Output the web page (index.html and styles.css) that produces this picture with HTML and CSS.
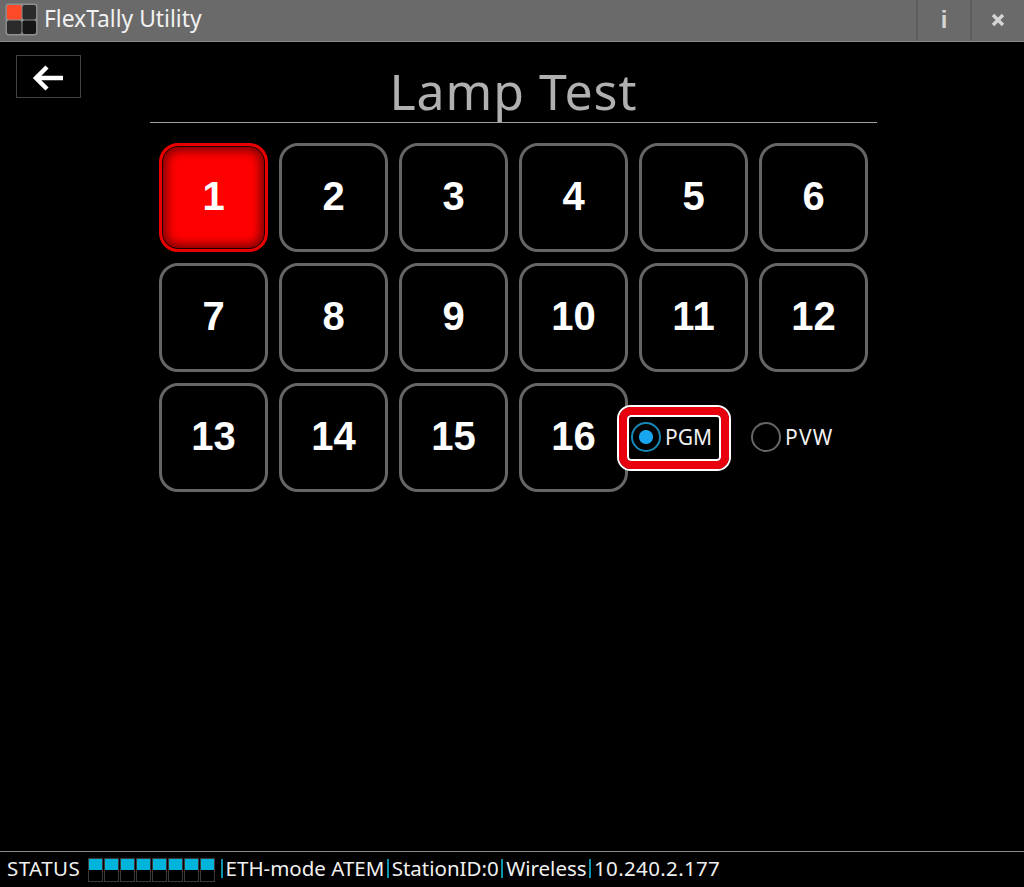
FILE: index.html
```html
<!DOCTYPE html>
<html lang="en">
<head>
<meta charset="utf-8">
<title>FlexTally Utility</title>
<link rel="stylesheet" href="styles.css">
</head>
<body>
<div class="app">
  <header class="titlebar">
    <svg class="logo" width="33" height="33" viewBox="0 0 34 34">
      <rect x="0.5" y="0.5" width="33" height="33" rx="3" fill="#8f8f8f"/>
      <rect x="2" y="2" width="15" height="15" rx="2" fill="#ff4a2a"/>
      <rect x="18" y="2" width="14" height="15" rx="2" fill="#2b2b2b"/>
      <rect x="2" y="18" width="15" height="14" rx="2" fill="#2b2b2b"/>
      <rect x="18" y="18" width="14" height="14" rx="2" fill="#151515"/>
    </svg>
    <span class="app-name">FlexTally Utility</span>
    <div class="win-buttons">
      <div class="win-btn info">i</div>
      <div class="win-btn close">
        <svg width="14" height="14" viewBox="0 0 14 14"><path d="M2 2L12 12M12 2L2 12" stroke="#d4d4d4" stroke-width="3.4"/></svg>
      </div>
    </div>
  </header>
  <main class="content">
    <div class="back">
      <svg width="34" height="30" viewBox="0 0 34 30"><path d="M32 15H5M16 4L5 15L16 26" fill="none" stroke="#fff" stroke-width="4.5"/></svg>
    </div>
    <div class="panel">
      <h1 class="title">Lamp Test</h1>
      <div class="grid">
        <div class="lamp on">1</div>
        <div class="lamp">2</div>
        <div class="lamp">3</div>
        <div class="lamp">4</div>
        <div class="lamp">5</div>
        <div class="lamp">6</div>
        <div class="lamp">7</div>
        <div class="lamp">8</div>
        <div class="lamp">9</div>
        <div class="lamp">10</div>
        <div class="lamp">11</div>
        <div class="lamp">12</div>
        <div class="lamp">13</div>
        <div class="lamp">14</div>
        <div class="lamp">15</div>
        <div class="lamp">16</div>
        <div class="radios">
          <div class="radio selected"><span class="dot"></span><span class="radio-text">PGM</span></div>
          <div class="radio"><span class="dot"></span><span class="radio-text pvw">PVW</span></div>
        </div>
      </div>
    </div>
  </main>
  <footer class="statusbar">
    <span class="label">STATUS</span>
    <div class="meter">
      <div class="cell"></div><div class="cell"></div><div class="cell"></div><div class="cell"></div>
      <div class="cell"></div><div class="cell"></div><div class="cell"></div><div class="cell"></div>
    </div>
    <span class="sep"></span><span>ETH-mode ATEM</span>
    <span class="sep"></span><span>StationID:0</span>
    <span class="sep"></span><span>Wireless</span>
    <span class="sep"></span><span class="ip">10.240.2.177</span>
  </footer>
</div>
</body>
</html>
```

FILE: styles.css
```css
* { box-sizing: border-box; }
html, body { margin: 0; height: 100%; background: #000; }
body { font-family: "Noto Sans", "Open Sans", sans-serif; color: #fff; overflow: hidden; }
.app { height: 887px; display: flex; flex-direction: column; }

.titlebar {
  height: 42px; flex: none; display: flex; align-items: center;
  background: #6a6a6a; border-bottom: 1px solid #8a8a8a; padding-left: 4px;
}
.logo { flex: none; margin: 0 6px 2px 1px; }
.app-name { font-size: 22.8px; color: #f2f2f2; padding-bottom: 5px; }
.win-buttons { margin-left: auto; display: flex; height: 100%; }
.win-btn {
  width: 54px; display: flex; align-items: center; justify-content: center;
  border-left: 2px solid #5e5e5e; color: #d4d4d4; padding-bottom: 2px;
}
.info { font: bold 24px "Liberation Sans", sans-serif; }

.content { flex: 1; min-height: 0; display: flex; padding: 13px 0 0 16px; }
.back {
  width: 65px; height: 43px; flex: none; border: 1px solid #444;
  display: flex; align-items: center; justify-content: center; padding: 3px 2px 0 0;
}
.panel { width: 727px; margin-left: 69px; }
.title {
  margin: 0; height: 68px; text-align: center; font-weight: 400; font-size: 50px; line-height: 72px;
  color: #b0b0b0; border-bottom: 1px solid #a0a0a0; letter-spacing: 1px;
}
.grid {
  display: grid; grid-template-columns: repeat(6, 109px); grid-auto-rows: 109px;
  gap: 11px; margin: 20px 0 0 9px;
}
.lamp {
  border: 3px solid #666; border-radius: 19px; background: #000;
  display: flex; align-items: center; justify-content: center;
  font: bold 40px "Liberation Sans", sans-serif; color: #fff; padding-bottom: 3px;
}
.lamp.on {
  border-color: #e80000; background: #f00;
  box-shadow: inset 0 0 0 1px #200, inset 0 0 10px 5px #800000;
}
.radios {
  grid-column: 5 / span 2; display: flex; align-items: center; gap: 20px; margin-left: -22px;
}
.radio { display: flex; align-items: center; gap: 4px; font-size: 21px; color: #f0f0f0; height: 66px; padding-bottom: 1px; }
.radio-text { padding-bottom: 1px; }
.pvw { letter-spacing: 1.2px; }
.radio.selected {
  width: 114px; padding-left: 12px;
  border: 2px solid #fff; border-radius: 14px; background: #000;
  position: relative;
}
.radio.selected::before {
  content: ""; position: absolute; inset: 0; border: 8px solid #e8000f; border-radius: 12px;
  box-shadow: inset 0 0 0 2px #fff; pointer-events: none;
}
.dot { width: 30px; height: 30px; border-radius: 50%; border: 2px solid #666; flex: none; }
.selected .dot {
  border-color: #1689b8;
  background: radial-gradient(circle, #18a6ee 0 6.5px, transparent 7.5px);
}

.statusbar {
  height: 36px; flex: none; display: flex; align-items: center; padding: 0 0 3px 7px;
  border-top: 1px solid #8a8a8a; font-size: 20.5px; color: #f0f0f0; white-space: nowrap;
}
.label { margin-right: 8px; letter-spacing: 0.45px; }
.meter { display: flex; gap: 1px; margin: 3px 3px 0 0; }
.cell {
  width: 15px; height: 24px; border: 1px solid #3a3a3a;
  background: linear-gradient(#00b4dc 0 50%, #000 50%);
}
.sep { width: 2px; height: 19px; background: #0a93ad; margin: 0 2.7px; flex: none; }
.ip { letter-spacing: 0.35px; }
```
